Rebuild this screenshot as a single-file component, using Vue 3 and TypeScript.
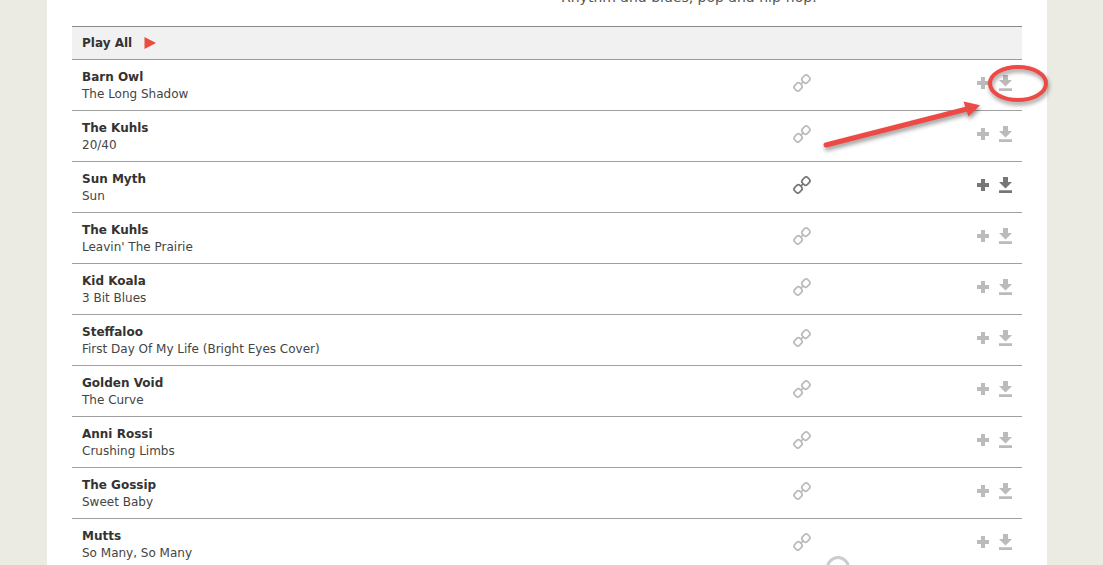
<script setup lang="ts">
interface Track {
  artist: string
  title: string
  active?: boolean
}

const tracks: Track[] = [
  { artist: 'Barn Owl', title: 'The Long Shadow' },
  { artist: 'The Kuhls', title: '20/40' },
  { artist: 'Sun Myth', title: 'Sun', active: true },
  { artist: 'The Kuhls', title: "Leavin' The Prairie" },
  { artist: 'Kid Koala', title: '3 Bit Blues' },
  { artist: 'Steffaloo', title: 'First Day Of My Life (Bright Eyes Cover)' },
  { artist: 'Golden Void', title: 'The Curve' },
  { artist: 'Anni Rossi', title: 'Crushing Limbs' },
  { artist: 'The Gossip', title: 'Sweet Baby' },
  { artist: 'Mutts', title: 'So Many, So Many' },
]
</script>

<template>
  <div class="page">
    <main class="card">
      <p class="blurb">Rhythm and blues, pop and hip-hop.</p>
      <section class="playlist">
        <button class="play-all" type="button">
          Play All
          <svg class="play" viewBox="0 0 12 12" aria-hidden="true">
            <path d="M0.5 0 L12 6 L0.5 12 Z" fill="#ea4b3c" />
          </svg>
        </button>
        <ul class="tracks">
          <li v-for="(track, i) in tracks" :key="i" class="track" :class="{ active: track.active }">
            <div class="info">
              <div class="artist">{{ track.artist }}</div>
              <div class="title">{{ track.title }}</div>
            </div>
            <a class="icon link" href="#" aria-label="Link to track">
              <svg viewBox="0 0 16 16" width="16" height="16" fill="none" stroke="currentColor" stroke-width="1.7">
                <g transform="rotate(-45 8 8)">
                  <rect x="-1.3" y="4.6" width="7.6" height="6.8" rx="2.6" />
                  <rect x="9.7" y="4.6" width="7.6" height="6.8" rx="2.6" />
                  <path d="M6 8 H10" />
                </g>
              </svg>
            </a>
            <div class="actions">
              <button class="icon" type="button" aria-label="Add track">
                <svg viewBox="0 0 12 12" width="12" height="12" fill="currentColor">
                  <path d="M4 0 H8 V4 H12 V8 H8 V12 H4 V8 H0 V4 H4 Z" />
                </svg>
              </button>
              <a class="icon" href="#" aria-label="Download track">
                <svg viewBox="0 0 14 16" width="14" height="16" fill="currentColor">
                  <path d="M5 0 H10 V5 H14 L7.5 11.5 L1 5 H5 Z M1 13.2 H14 V16 H1 Z" />
                </svg>
              </a>
            </div>
          </li>
        </ul>
      </section>
      <svg class="callout" viewBox="0 0 240 100" width="240" height="100" aria-hidden="true">
        <g class="marks">
          <ellipse cx="203" cy="23.5" rx="28" ry="16.5" fill="none" stroke="#ee4a45" stroke-width="4" />
          <path d="M11 85 L152 49" stroke="#ee4a45" stroke-width="5" stroke-linecap="round" />
          <path d="M148.500 41.5 L165 45.3 L153.500 56.5 Z" fill="#ee4a45" />
        </g>
      </svg>
      <span class="ring" aria-hidden="true"></span>
    </main>
  </div>
</template>

<style>
body {
  margin: 0;
}
</style>

<style scoped>
.page {
  box-sizing: border-box;
  height: 100vh;
  overflow: hidden;
  padding: 0 56px 0 47px;
  background: #ebebe3;
  color: #333;
  font-family: "DejaVu Sans", Verdana, sans-serif;
}
.card {
  position: relative;
  min-height: 100%;
  margin-top: -13px;
  padding: 0 25px 13px;
  background: #fff;
}
.blurb {
  width: 461px;
  height: 20px;
  margin: 0 0 0 auto;
  font-size: 14px;
  line-height: 20px;
  color: #555;
}
.playlist {
  margin-top: 19px;
  border-top: 1px solid #888;
}
.play-all {
  display: flex;
  align-items: center;
  gap: 12px;
  width: 100%;
  height: 33px;
  padding: 0 10px;
  border: 0;
  border-bottom: 1px solid #999;
  background: #f1f1f1;
  color: #333;
  font: bold 12px "DejaVu Sans", Verdana, sans-serif;
}
.play {
  width: 12px;
  height: 12px;
}
.tracks {
  margin: 0;
  padding: 0;
  list-style: none;
}
.track {
  display: grid;
  grid-template-columns: 1fr 16px 202px;
  align-items: center;
  padding: 9px 10px 7px;
  border-bottom: 1px solid #a0a0a0;
  font-size: 12px;
  line-height: 17px;
}
.artist {
  font-weight: bold;
}
.title {
  color: #444;
}
.icon {
  display: block;
  padding: 0;
  border: 0;
  background: none;
  color: #bbb;
}
.icon svg {
  display: block;
  overflow: visible;
}
.active .icon {
  color: #777;
}
.actions {
  display: flex;
  align-items: center;
  justify-content: flex-end;
  gap: 9px;
}
.link,
.actions {
  margin-top: -6px;
}
.callout {
  position: absolute;
  top: 73px;
  right: -8px;
  overflow: visible;
}
.marks {
  filter: drop-shadow(1px 3px 2px rgba(0, 0, 0, 0.4));
}
.ring {
  position: absolute;
  top: 569px;
  right: 197px;
  width: 18px;
  height: 18px;
  border: 3px solid #ccc;
  border-radius: 50%;
}
</style>
